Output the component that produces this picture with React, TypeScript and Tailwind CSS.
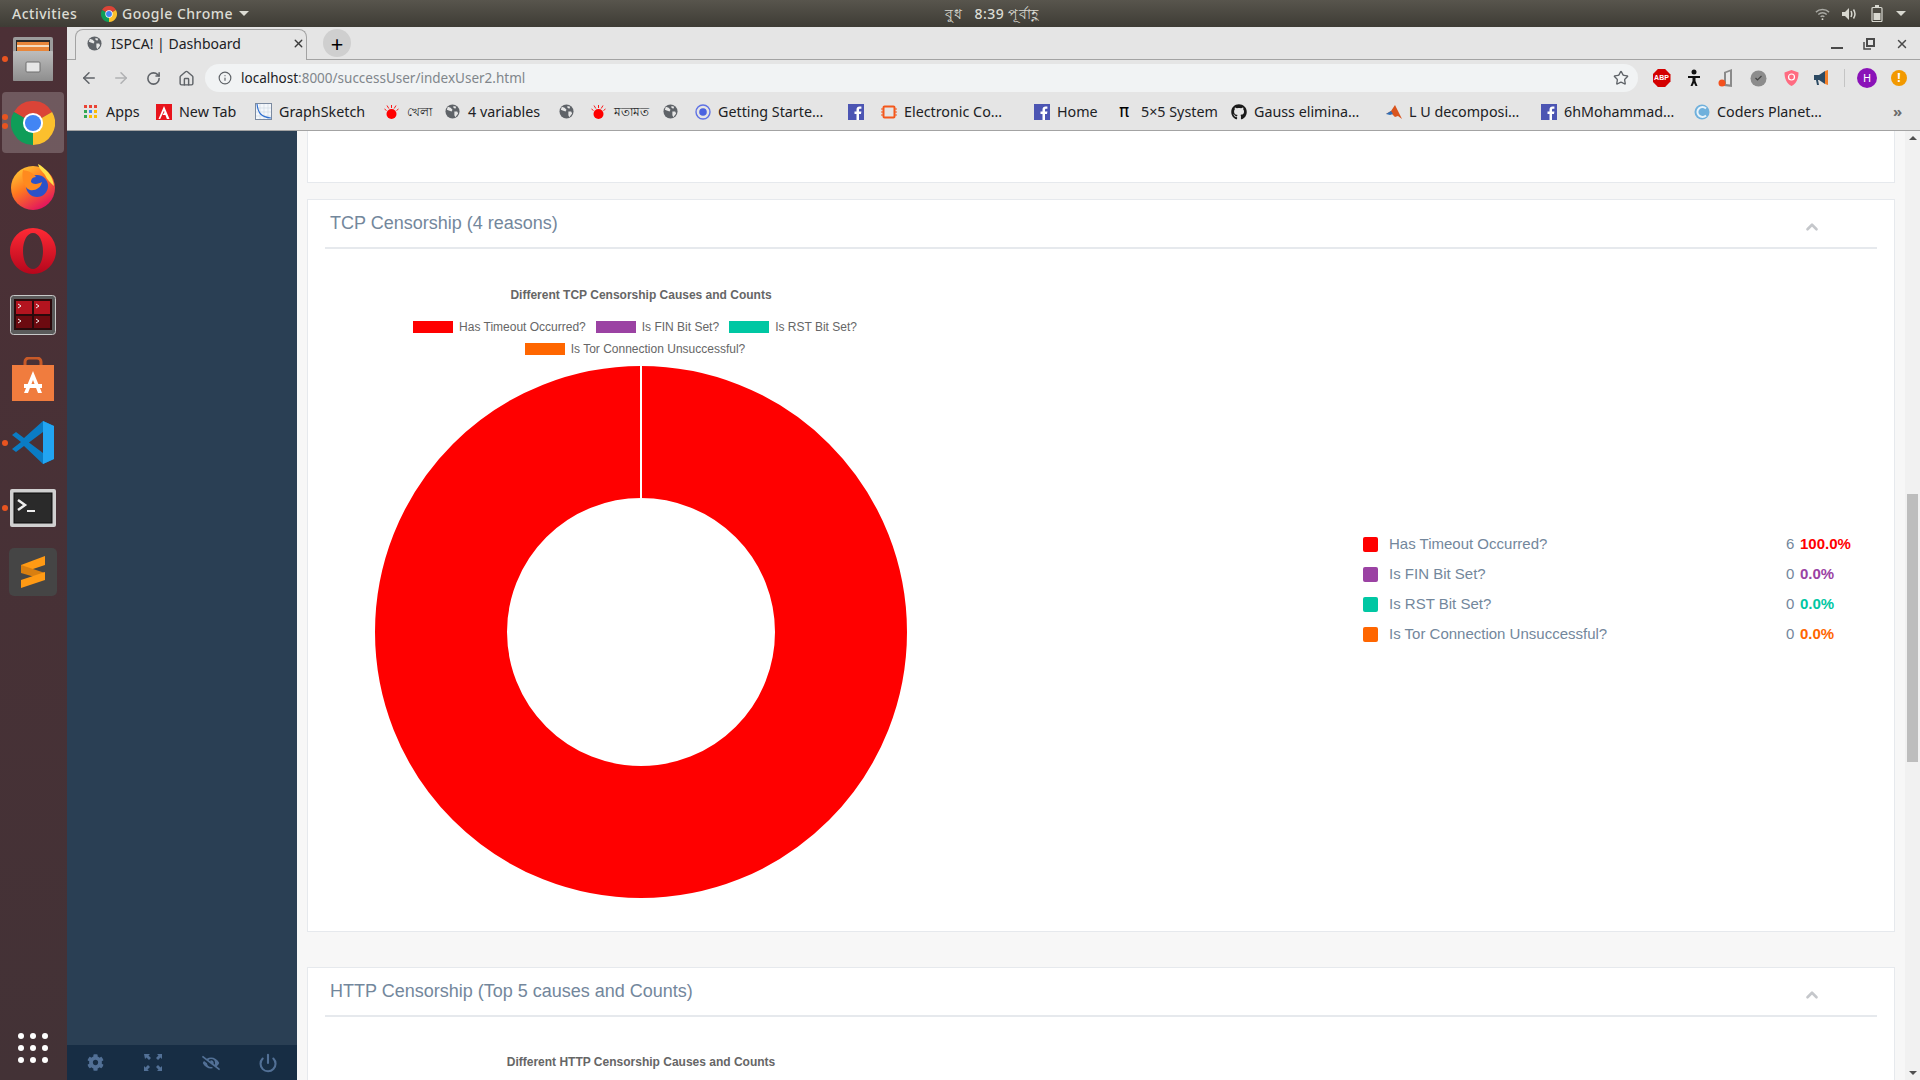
import { ArrowLeft, ArrowRight, ChevronUp, Home, Info, Power, RotateCw, Star, X } from "lucide-react";
import { FaCog, FaEyeSlash, FaGithub } from "react-icons/fa";

const SANS = "font-['Liberation_Sans',Arial,sans-serif]";
const UI = "font-['Noto_Sans','Open_Sans',sans-serif]";

function ChromeLogo({ size }: { size: number }) {
  return (
    <svg width={size} height={size} viewBox="0 0 48 48">
      <path d="M24 24L3.2 12A24 24 0 0 1 44.8 12Z" fill="#db4437" />
      <path d="M24 24L44.8 12A24 24 0 0 1 24 48Z" fill="#fbc02d" />
      <path d="M24 24L24 48A24 24 0 0 1 3.2 12Z" fill="#0f9d58" />
      <circle cx="24" cy="24" r="11" fill="#fff" />
      <circle cx="24" cy="24" r="8.8" fill="#4285f4" />
    </svg>
  );
}

function Globe({ color = "#5f6368" }: { color?: string }) {
  return (
    <svg width="15" height="15" viewBox="0 0 16 16">
      <circle cx="8" cy="8" r="7.5" fill={color} />
      <path d="M3 3l3 1 2 2-1 2-3-1-2-1zM10 8l3 0 1 2-3 4-1-2zM9 2l3 1-1 2-2-1z" fill="#e6e6e6" />
    </svg>
  );
}

function Facebook() {
  return (
    <svg width="16" height="16" viewBox="0 0 16 16">
      <rect width="16" height="16" fill="#4c55b3" />
      <path d="M11 16V10h2l.4-2.5H11V6c0-.8.3-1.2 1.2-1.2h1.2V2.6C13 2.5 12.300 2.500 11.600 2.500 9.700 2.500 8.500 3.600 8.500 5.700v1.800H6.500V10h2v6z" fill="#fff" />
    </svg>
  );
}

function Bug() {
  return (
    <svg width="15" height="16" viewBox="0 0 15 16">
      <circle cx="7.500" cy="10" r="5" fill="#f00" />
      <path d="M7.500 1v3M3 1.500l1.800 3M12 1.500l-1.800 3M.5 5l2 1.500M14.500 5l-2 1.500" stroke="#f00" strokeWidth=".9" />
    </svg>
  );
}

function AppsGrid() {
  const colors = ["#ea4335", "#ea4335", "#ea4335", "#34a853", "#4285f4", "#fbbc05", "#34a853", "#fbbc05", "#fbbc05"];
  return (
    <div className="grid grid-cols-3 gap-[2px] w-[14px]">
      {colors.map((c, i) => (
        <span key={i} className="w-[3px] h-[3px] block" style={{ backgroundColor: c }} />
      ))}
    </div>
  );
}

const BOOKMARKS = [
  { w: "w-[73px]", label: "Apps", icon: <AppsGrid /> },
  {
    w: "w-[100px]",
    label: "New Tab",
    icon: (
      <svg width="16" height="16" viewBox="0 0 16 16">
        <rect width="16" height="16" fill="#e8141c" />
        <path d="M8 2l5.500 13h-2.600L9.400 11H6.600L8.400 8.200 8 6.800 4.200 15H2.500z" fill="#fff" />
      </svg>
    ),
  },
  {
    w: "w-[128px]",
    label: "GraphSketch",
    icon: (
      <svg width="17" height="17" viewBox="0 0 17 17">
        <rect x=".5" y=".5" width="16" height="16" fill="#f4f7fb" stroke="#7b8aa0" />
        <path d="M1 5h15M1 9h15M1 13h15M5 1v15M9 1v15M13 1v15" stroke="#cfd8e3" strokeWidth=".6" />
        <path d="M2 1c1 9 4 13 14 14" fill="none" stroke="#2f6fd0" strokeWidth="1.200" />
      </svg>
    ),
  },
  { w: "w-[61px]", label: "খেলা", small: true, icon: <Bug /> },
  { w: "w-[114px]", label: "4 variables", icon: <Globe /> },
  { w: "w-[32px]", label: "", icon: <Globe /> },
  { w: "w-[72px]", label: "মতামত", small: true, icon: <Bug /> },
  { w: "w-[32px]", label: "", icon: <Globe /> },
  {
    w: "w-[153px]",
    label: "Getting Starte…",
    icon: (
      <svg width="16" height="16" viewBox="0 0 16 16">
        <circle cx="8" cy="8" r="7" fill="none" stroke="#5f72e4" strokeWidth="1.400" />
        <circle cx="8" cy="8" r="3.800" fill="#4b63e0" />
      </svg>
    ),
  },
  { w: "w-[33px]", label: "", icon: <Facebook /> },
  {
    w: "w-[153px]",
    label: "Electronic Co…",
    icon: (
      <svg width="16" height="16" viewBox="0 0 16 16">
        <rect x="2.500" y="2.500" width="11" height="11" rx="1" fill="none" stroke="#f4581c" strokeWidth="2" />
        <path d="M0 5h2M0 8h2M0 11h2M14 5h2M14 8h2M14 11h2" stroke="#f4581c" />
      </svg>
    ),
  },
  { w: "w-[84px]", label: "Home", icon: <Facebook /> },
  {
    w: "w-[113px]",
    label: "5×5 System",
    icon: <span className="text-[17px] leading-none text-black font-['DejaVu_Sans',sans-serif] w-[13px]">π</span>,
  },
  { w: "w-[155px]", label: "Gauss elimina…", icon: <FaGithub size={16} color="#1a1a1a" /> },
  {
    w: "w-[155px]",
    label: "L U decomposi…",
    icon: (
      <svg width="16" height="16" viewBox="0 0 16 16">
        <path d="M0 10l5-3 4-6 3 6 4 8-4-3-3 1-3-3z" fill="#d9541e" />
        <path d="M0 10l5-3 2 3-3 1z" fill="#2f6fb7" />
      </svg>
    ),
  },
  { w: "w-[153px]", label: "6hMohammad…", icon: <Facebook /> },
  {
    w: "w-[200px]",
    label: "Coders Planet…",
    icon: (
      <svg width="16" height="16" viewBox="0 0 16 16">
        <circle cx="8" cy="8" r="7.500" fill="#6fb0dc" />
        <path d="M12 4.500A5 5 0 1 0 12 11.500" fill="none" stroke="#e8f3fa" strokeWidth="2" />
      </svg>
    ),
  },
];

const DOCK = [
  {
    h: "h-[64px]",
    dots: 1,
    icon: (
      <svg width="40" height="44" viewBox="0 0 40 44">
        <defs>
          <linearGradient id="cab" x1="0" y1="0" x2="0" y2="1">
            <stop offset="0" stopColor="#bdbdbd" />
            <stop offset="1" stopColor="#8e8e8e" />
          </linearGradient>
        </defs>
        <rect x="0" y="0" width="40" height="44" rx="2" fill="#9c9c9c" />
        <rect x="3" y="3" width="34" height="11" fill="#2a2a2a" />
        <rect x="4" y="5" width="32" height="9" fill="#e8863a" />
        <rect x="4" y="8" width="32" height="2" fill="#f5dcc0" />
        <rect x="0" y="14" width="40" height="30" rx="1" fill="url(#cab)" />
        <rect x="13" y="25" width="14" height="10" rx="1" fill="#e6e6e6" stroke="#6e6e6e" />
      </svg>
    ),
  },
  { h: "h-[64px]", dots: 2, active: true, icon: <ChromeLogo size={44} /> },
  {
    h: "h-[63px]",
    dots: 0,
    icon: (
      <svg width="44" height="46" viewBox="0 0 44 46">
        <defs>
          <linearGradient id="ff" x1="0" y1="0" x2="0.600" y2="1">
            <stop offset="0" stopColor="#ffd93b" />
            <stop offset="0.500" stopColor="#ff7a1f" />
            <stop offset="1" stopColor="#e3175c" />
          </linearGradient>
        </defs>
        <circle cx="22" cy="24" r="22" fill="url(#ff)" />
        <path d="M27 0c6 3 15 11 16 22-3-3-7-6-9-11-2-3-6-6-7-11z" fill="#ffe14a" />
        <circle cx="26" cy="22" r="11" fill="#2a52c9" />
        <path d="M12 6c5 1 9 2 13 7-4 0-5 3-5 5 2 3 8 2 11 0-1 6-7 9-12 8-6-2-9-12-7-20z" fill="#ff8a1f" />
      </svg>
    ),
  },
  {
    h: "h-[65px]",
    dots: 0,
    icon: (
      <svg width="46" height="46" viewBox="0 0 46 46">
        <defs>
          <linearGradient id="op" x1="0" y1="0" x2="0" y2="1">
            <stop offset="0" stopColor="#ff2a35" />
            <stop offset="1" stopColor="#b5061c" />
          </linearGradient>
        </defs>
        <path
          fillRule="evenodd"
          d="M23 0a23 23 0 1 1 0 46a23 23 0 1 1 0-46zM23 5c-6 0-10 8-10 18s4 18 10 18 10-8 10-18-4-18-10-18z"
          fill="url(#op)"
        />
      </svg>
    ),
  },
  {
    h: "h-[63px]",
    dots: 0,
    icon: (
      <svg width="46" height="40" viewBox="0 0 46 40">
        <rect x="0.500" y="0.500" width="45" height="39" rx="3" fill="#5a5a5a" stroke="#c8c8c8" />
        <rect x="4" y="4" width="38" height="31" fill="#2a0a0c" />
        <rect x="6" y="6" width="16" height="13" fill="#b3141f" />
        <rect x="24" y="6" width="16" height="13" fill="#b3141f" />
        <rect x="6" y="21" width="16" height="12" fill="#6c0a10" />
        <rect x="24" y="21" width="16" height="12" fill="#6c0a10" />
        <path d="M8 9l3 2-3 2M26 9l3 2-3 2M8 24l3 2-3 2M26 24l3 2-3 2" stroke="#eee" fill="none" />
      </svg>
    ),
  },
  {
    h: "h-[65px]",
    dots: 0,
    icon: (
      <svg width="42" height="44" viewBox="0 0 42 44">
        <path d="M13 9V5a4 4 0 0 1 4-4h8a4 4 0 0 1 4 4v4" fill="none" stroke="#c85a28" strokeWidth="3" />
        <path d="M0 8h42v36H0z" fill="#f07c3e" />
        <path d="M21 14l9 22h-4l-5-13-5 13h-4z" fill="#fff" />
        <rect x="12" y="27" width="18" height="4" fill="#fff" />
      </svg>
    ),
  },
  {
    h: "h-[63px]",
    dots: 1,
    icon: (
      <svg width="42" height="43" viewBox="0 0 42 43">
        <path d="M31 0l11 5v33l-11 5-19-18-8 6-4-3 9-7-9-7 4-3 8 6z" fill="#0a7cc4" />
        <path d="M31 0l11 5v33l-11 5z" fill="#22a5f2" />
        <path d="M31 11L17 21.500 31 32z" fill="#4a3035" />
      </svg>
    ),
  },
  {
    h: "h-[68px]",
    dots: 1,
    icon: (
      <svg width="46" height="38" viewBox="0 0 46 38">
        <rect width="46" height="38" rx="2" fill="#d0d0d0" />
        <rect x="4" y="4" width="38" height="30" fill="#2a2a2a" stroke="#0a0a0a" />
        <path d="M8 11l7 5-7 5" fill="none" stroke="#eee" strokeWidth="2.500" />
        <rect x="17" y="21" width="8" height="2" fill="#eee" />
      </svg>
    ),
  },
  {
    h: "h-[60px]",
    dots: 0,
    icon: (
      <div className="w-[48px] h-[48px] rounded-[5px] bg-[#454545] flex items-center justify-center">
        <svg width="24" height="32" viewBox="0 0 24 32">
          <path d="M24 0v9L0 17V9z" fill="#ff9a14" />
          <path d="M0 9l24 8v7L0 17z" fill="#d97f10" />
          <path d="M24 16v8L0 32v-8z" fill="#ff9a14" />
        </svg>
      </div>
    ),
  },
];

const REASONS = [
  { label: "Has Timeout Occurred?", count: 6, pct: "100.0%", bg: "bg-[#ff0000]", text: "text-[#ff0000]" },
  { label: "Is FIN Bit Set?", count: 0, pct: "0.0%", bg: "bg-[#9b42a3]", text: "text-[#9b42a3]" },
  { label: "Is RST Bit Set?", count: 0, pct: "0.0%", bg: "bg-[#00c7a3]", text: "text-[#00c7a3]" },
  { label: "Is Tor Connection Unsuccessful?", count: 0, pct: "0.0%", bg: "bg-[#ff6600]", text: "text-[#ff6600]" },
];

function ChartLegendItem({ color, label }: { color: string; label: string }) {
  return (
    <span className="flex items-center gap-[6px]">
      <span className={`w-[40px] h-[12px] ${color}`} />
      <span>{label}</span>
    </span>
  );
}

function PanelHeader({ title }: { title: string }) {
  return (
    <div className="mx-[17px] h-[49px] pl-[5px] pr-[56px] border-b-2 border-[#e6e9ed] flex items-center justify-between">
      <h2 className={`${SANS} text-[18px] text-[#73879c] font-normal`}>{title}</h2>
      <ChevronUp size={18} strokeWidth={3.500} className="text-[#c5c7cb] mt-[6px]" />
    </div>
  );
}

export default function App() {
  return (
    <div className={`w-[1920px] h-[1080px] overflow-hidden flex flex-col ${UI}`}>
      {/* GNOME top bar */}
      <div className="h-[27px] shrink-0 flex items-center bg-gradient-to-b from-[#58554d] to-[#3e3c35] text-[#dcdcd4] text-[14px] font-medium tracking-[0.5px]">
        <div className="w-[945px] flex items-center pl-[12px]">
          <span className="w-[89px]">Activities</span>
          <ChromeLogo size={16} />
          <span className="ml-[5px]">Google Chrome</span>
          <span className="ml-[6px] w-0 h-0 border-x-[5px] border-x-transparent border-t-[5px] border-t-[#dcdcd4]" />
        </div>
        <span className="w-[110px] whitespace-nowrap">বুধ &nbsp;&nbsp;8:39 পূর্বাহ্ণ</span>
        <div className="ml-auto flex items-center pr-[14px]">
          <svg width="15" height="14" viewBox="0 0 16 14" fill="none" stroke="#a9a9a3" strokeWidth="1.500">
            <path d="M1 5a10 10 0 0 1 14 0M3.500 7.500a6.500 6.500 0 0 1 9 0M6 10a3 3 0 0 1 4 0" />
            <circle cx="8" cy="12.500" r="1" fill="#d8d8d0" stroke="none" />
          </svg>
          <svg className="ml-[11px]" width="16" height="14" viewBox="0 0 16 14" fill="none">
            <path d="M1 5h3l4-4v12l-4-4H1z" fill="#d8d8d0" />
            <path d="M10 4c1 2 1 4 0 6M12.500 2.500c2 3 2 6 0 9" stroke="#d8d8d0" strokeWidth="1.500" />
          </svg>
          <svg className="ml-[14px]" width="12" height="17" viewBox="0 0 12 17" fill="none">
            <rect x="1" y="2.500" width="10" height="14" rx="1" stroke="#d8d8d0" strokeWidth="1.200" />
            <rect x="4" y="0" width="4" height="2" fill="#d8d8d0" />
            <rect x="2.500" y="8" width="7" height="7" fill="#d8d8d0" />
          </svg>
          <span className="w-0 h-0 ml-[13px] border-x-[5px] border-x-transparent border-t-[5px] border-t-[#d8d8d0]" />
        </div>
      </div>

      <div className="flex-1 flex min-h-0">
        {/* Ubuntu dock */}
        <div className="w-[67px] shrink-0 bg-gradient-to-b from-[#4c3036] to-[#433236] flex flex-col">
          {DOCK.map((d, i) => (
            <div key={i} className={`${d.h} relative flex items-center justify-center pr-[1px]`}>
              {d.active && <div className="absolute left-[2px] right-[3px] top-[1px] bottom-[2px] rounded-[4px] bg-white/20" />}
              <div className="relative">{d.icon}</div>
              {d.dots === 1 && <span className="absolute left-[2px] top-1/2 -mt-[3px] w-[6px] h-[6px] rounded-full bg-[#e95420]" />}
              {d.dots === 2 && (
                <span className="absolute left-[2px] top-[23px] flex flex-col gap-[3px]">
                  <span className="w-[6px] h-[6px] rounded-full bg-[#e95420]" />
                  <span className="w-[6px] h-[6px] rounded-full bg-[#e95420]" />
                </span>
              )}
            </div>
          ))}
          <div className="mt-auto h-[53px] pb-[11px] pr-[1px] flex items-center justify-center">
            <div className="grid grid-cols-3 gap-x-[6px] gap-y-[6px]">
              {Array.from({ length: 9 }).map((_, i) => (
                <span key={i} className="w-[6px] h-[6px] rounded-full bg-white" />
              ))}
            </div>
          </div>
        </div>

        {/* Chrome window */}
        <div className="flex-1 min-w-0 flex flex-col bg-[#e5e5e5]">
          <div className="h-[33px] shrink-0 flex items-end border-b border-[#a3a3a3] pl-[8px]">
            <div className="w-[232px] h-[31px] -mb-px rounded-t-[8px] border border-b-0 border-[#a3a3a3] bg-[#e5e5e5] flex items-center pl-[11px] pr-[1px] pb-[3px] text-[14px] text-[#202124]">
              <Globe />
              <span className="ml-[9px]">ISPCA! | Dashboard</span>
              <X size={13} className="ml-auto text-[#3c3c3c]" strokeWidth={2.500} />
            </div>
            <div className="ml-[16px] mb-[2px] w-[28px] h-[28px] rounded-full bg-[#cfcfcf] flex items-center justify-center text-[22px] leading-none text-black">+</div>
            <div className="ml-auto mb-[8px] flex items-center gap-[20px] pr-[11px] text-[#4a4a4a]">
              <span className="w-[12px] h-[2px] bg-[#4a4a4a] mt-[8px]" />
              <svg width="12" height="12" viewBox="0 0 12 12" fill="none" stroke="#4a4a4a" strokeWidth="2">
                <rect x="4" y="1" width="7" height="7" />
                <path d="M1 4v7h7" strokeWidth="1.500" />
              </svg>
              <X size={14} strokeWidth={2.500} />
            </div>
          </div>

          <div className="h-[37px] shrink-0 pl-[6px] pt-[4px] flex items-start">
            <div className="h-[28px] flex items-center">
              <div className="w-[32px] flex justify-center"><ArrowLeft size={18} className="text-[#5f6368]" /></div>
              <div className="w-[32px] flex justify-center"><ArrowRight size={18} className="text-[#b0b1b3]" /></div>
              <div className="w-[33px] flex justify-center"><RotateCw size={15} strokeWidth={2.500} className="text-[#5f6368]" /></div>
              <div className="w-[32px] flex justify-center"><Home size={17} className="text-[#5f6368]" /></div>
            </div>
            <div className="ml-[3px] w-[1433px] h-[28px] rounded-full bg-[#f1f3f4] flex items-center pl-[13px] pr-[9px] text-[13.5px]">
              <Info size={14} className="text-[#5f6368]" />
              <span className="ml-[9px] text-[#202124]">localhost</span>
              <span className="text-[#80868b]">:8000/successUser/indexUser2.html</span>
              <Star size={16} className="ml-auto text-[#5f6368]" />
            </div>
            <div className="ml-[7px] h-[28px] flex items-center">
              <div className="w-[33px] flex justify-center">
                <span className={`${SANS} w-[18px] h-[18px] [clip-path:polygon(30%_0,70%_0,100%_30%,100%_70%,70%_100%,30%_100%,0_70%,0_30%)] bg-[#d40000] text-white text-[7px] font-bold flex items-center justify-center`}>ABP</span>
              </div>
              <div className="w-[32px] flex justify-center">
                <svg width="12" height="18" viewBox="0 0 12 18">
                  <circle cx="6" cy="3" r="2.500" fill="#111" />
                  <path d="M0 7h12v2H7.500v3l2 5H7.500L6 14l-1.500 3h-2l2-5V9H0z" fill="#111" />
                </svg>
              </div>
              <div className="w-[32px] flex justify-center">
                <svg width="16" height="18" viewBox="0 0 16 18">
                  <path d="M6 3l8-3v18l-8-1V5z" fill="#8a8a8a" />
                  <path d="M8 4l4-1.500v13l-4-.5z" fill="#e8e8e8" />
                  <circle cx="4" cy="14" r="3.500" fill="#f4511e" />
                </svg>
              </div>
              <div className="w-[33px] flex justify-center">
                <svg width="17" height="17" viewBox="0 0 17 17">
                  <circle cx="8.500" cy="8.500" r="8" fill="#8c8c8c" />
                  <path d="M5.500 8l2 2 4-4" fill="none" stroke="#444" strokeWidth="1.200" />
                </svg>
              </div>
              <div className="w-[32px] flex justify-center">
                <svg width="15" height="16" viewBox="0 0 15 16">
                  <path d="M7.500 0l7 2.500c0 6-2 11-7 13.500C2.500 13.500.5 8.500.5 2.500z" fill="#ff6b81" />
                  <circle cx="7.500" cy="7" r="3" fill="none" stroke="#fff" strokeWidth="1.200" />
                </svg>
              </div>
              <div className="w-[32px] flex justify-center">
                <svg width="18" height="16" viewBox="0 0 18 16">
                  <path d="M0 5h5l6-4v13l-6-4H4l1 5H3L2 10H0z" fill="#2c4a63" />
                  <path d="M11 1l3-1v15l-3-1z" fill="#f4802a" />
                </svg>
              </div>
              <span className="ml-[5px] w-px h-[18px] bg-[#c4c4c4]" />
              <div className="ml-[12px] w-[20px] h-[20px] rounded-full bg-[#8a12b8] text-white text-[11px] flex items-center justify-center">H</div>
              <div className="ml-[14px] w-[16px] h-[16px] rounded-full bg-[#f29900] text-white text-[12px] font-bold flex items-center justify-center">!</div>
            </div>
          </div>

          <div className="h-[34px] shrink-0 border-b border-[#a3a3a3] pb-[4px] pl-[15px] flex items-center text-[14.3px] text-[#202124] whitespace-nowrap">
            {BOOKMARKS.map((b, i) => (
              <div key={i} className={`${b.w} shrink-0 flex items-center gap-[7px]`}>
                <span className="w-[17px] flex justify-center shrink-0">{b.icon}</span>
                {b.label && <span className={b.small ? "text-[12px]" : ""}>{b.label}</span>}
              </div>
            ))}
            <span className="text-[#6b6b6b] text-[15px] font-bold">»</span>
          </div>

          {/* Page */}
          <div className="flex-1 min-h-0 flex">
            <aside className="w-[230px] shrink-0 bg-[#2a3f54] flex flex-col justify-end">
              <div className="h-[35px] bg-[#172d44] grid grid-cols-4 items-center justify-items-center text-[#527096]">
                <FaCog size={17} />
                <svg width="18" height="17" viewBox="0 0 18 17" fill="#527096">
                  <path d="M0 0h6L4.500 1.500 7 4 5 6 2.500 3.500 1 5zM18 0v5l-1.500-1.500L14 6l-2-2 2.500-2.500L13 0zM0 17v-5l1.500 1.500L4 11l2 2-2.500 2.500L5 17zM18 17h-5l1.500-1.500L12 13l2-2 2.500 2.500L18 12z" />
                </svg>
                <FaEyeSlash size={18} />
                <Power size={20} strokeWidth={2.500} />
              </div>
            </aside>

            <main className="flex-1 min-w-0 bg-[#f7f7f7] flex">
              <div className="w-[1608px] shrink-0 pl-[10px] flex flex-col">
                <div className="h-[52px] shrink-0 w-[1588px] bg-white border border-t-0 border-[#e6e9ed]" />

                <section className={`mt-[16px] h-[733px] shrink-0 w-[1588px] bg-white border border-[#e6e9ed] flex flex-col ${SANS}`}>
                  <PanelHeader title="TCP Censorship (4 reasons)" />
                  <div className="flex-1 flex items-center">
                    <div className="ml-[18px] w-[630px] h-full flex flex-col items-center pt-[39px]">
                      <div className="text-[12px] leading-[14px] font-bold text-[#666]">Different TCP Censorship Causes and Counts</div>
                      <div className="mt-[18px] pr-[12px] flex flex-col items-center gap-[8px] text-[12px] leading-[14px] text-[#666]">
                        <div className="flex gap-[10px]">
                          <ChartLegendItem color="bg-[#ff0000]" label="Has Timeout Occurred?" />
                          <ChartLegendItem color="bg-[#9b42a3]" label="Is FIN Bit Set?" />
                          <ChartLegendItem color="bg-[#00c7a3]" label="Is RST Bit Set?" />
                        </div>
                        <ChartLegendItem color="bg-[#ff6600]" label="Is Tor Connection Unsuccessful?" />
                      </div>
                      <svg className="mt-[10px]" width="532" height="532" viewBox="0 0 532 532">
                        <circle cx="266" cy="266" r="200" fill="none" stroke="#ff0000" strokeWidth="132" />
                        <rect x="265" y="0" width="2" height="133" fill="#fff" />
                      </svg>
                    </div>
                    <div className="ml-[407px] w-[490px] pb-[2px] flex flex-col">
                      {REASONS.map((r) => (
                        <div key={r.label} className="h-[30px] flex items-center text-[15px] text-[#73879c]">
                          <span className={`w-[15px] h-[15px] rounded-[2px] ${r.bg}`} />
                          <span className="ml-[11px] w-[397px]">{r.label}</span>
                          <span className="w-[14px]">{r.count}</span>
                          <span className={`font-bold ${r.text}`}>{r.pct}</span>
                        </div>
                      ))}
                    </div>
                  </div>
                </section>

                <section className={`mt-[35px] flex-1 w-[1588px] bg-white border border-b-0 border-[#e6e9ed] ${SANS}`}>
                  <PanelHeader title="HTTP Censorship (Top 5 causes and Counts)" />
                  <div className="ml-[18px] w-[630px] pt-[38px] text-center text-[12px] leading-[14px] font-bold text-[#666]">
                    Different HTTP Censorship Causes and Counts
                  </div>
                </section>
              </div>

              {/* Scrollbar */}
              <div className="w-[15px] ml-auto bg-[#f1f1f1] flex flex-col items-center py-[5px]">
                <span className="w-0 h-0 border-x-[4px] border-x-transparent border-b-[4px] border-b-[#505050]" />
                <span className="mt-[354px] w-[11px] h-[268px] bg-[#bdbdbd]" />
                <span className="mt-auto w-0 h-0 border-x-[4px] border-x-transparent border-t-[4px] border-t-[#505050]" />
              </div>
            </main>
          </div>
        </div>
      </div>
    </div>
  );
}
